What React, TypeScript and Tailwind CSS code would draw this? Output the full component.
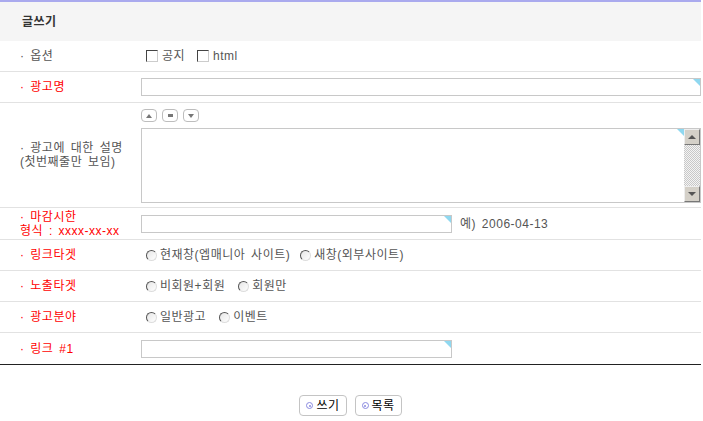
import React from "react";

const FONT = { fontFamily: '"Liberation Sans", "Noto Sans CJK KR", sans-serif' };

function Corner() {
  return (
    <span className="pointer-events-none absolute right-0 top-0 h-0 w-0 border-l-[7px] border-t-[7px] border-l-transparent border-t-[#8fd8f0]" />
  );
}

function TextInput({ width }: { width: string }) {
  return (
    <div className={`relative h-[18px] border border-[#c8c8c8] bg-white ${width}`}>
      <Corner />
    </div>
  );
}

function Check({ label }: { label: string }) {
  return (
    <span className="flex items-center gap-[4px]">
      <span className="h-[12px] w-[12px] border border-l-[#444] border-t-[#444] border-r-[#ccc] border-b-[#ccc] bg-white" />
      <span>{label}</span>
    </span>
  );
}

function Radio({ label }: { label: string }) {
  return (
    <span className="flex items-center gap-[3px]">
      <span className="h-[11px] w-[11px] rounded-full border border-t-[#555] border-l-[#555] border-r-[#ddd] border-b-[#ddd] bg-gradient-to-br from-[#e6e6e6] to-white" />
      <span>{label}</span>
    </span>
  );
}

function Label({ children, red }: { children: React.ReactNode; red?: boolean }) {
  return (
    <div className={`w-[141px] shrink-0 pl-[20px] leading-[14px] ${red ? "text-[#ff0000]" : "text-[#555]"}`}>
      {children}
    </div>
  );
}

function Row({ children, h }: { children: React.ReactNode; h: string }) {
  return <div className={`flex items-center border-b border-[#e2e2e2] ${h}`}>{children}</div>;
}

function SmallBtn({ kind }: { kind: "up" | "mid" | "down" }) {
  return (
    <span className="flex h-[13px] w-[16px] items-center justify-center rounded-[4px] border border-[#bdbdbd] bg-white">
      {kind === "up" && <span className="h-0 w-0 border-x-[3px] border-b-[4px] border-x-transparent border-b-[#777]" />}
      {kind === "mid" && <span className="h-[3px] w-[5px] bg-[#777]" />}
      {kind === "down" && <span className="h-0 w-0 border-x-[3px] border-t-[4px] border-x-transparent border-t-[#777]" />}
    </span>
  );
}

function ScrollBtn({ down }: { down?: boolean }) {
  return (
    <span className="flex h-[16px] w-[16px] items-center justify-center border border-t-[#eee] border-l-[#eee] border-r-[#777] border-b-[#777] bg-[#d4d0c8]">
      {down ? (
        <span className="h-0 w-0 border-x-[4px] border-t-[4px] border-x-transparent border-t-[#555]" />
      ) : (
        <span className="h-0 w-0 border-x-[4px] border-b-[4px] border-x-transparent border-b-[#555]" />
      )}
    </span>
  );
}

function ActionBtn({ label }: { label: string }) {
  return (
    <button className="flex h-[21px] items-center gap-[3px] rounded-[4px] border border-[#c4c4c4] bg-white px-[6px] text-[12px] text-black">
      <span className="flex h-[7px] w-[7px] items-center justify-center rounded-full border border-[#8a8ae0]">
        <span className="h-[2px] w-[2px] rounded-full bg-[#8a8ae0]" />
      </span>
      {label}
    </button>
  );
}

export default function App() {
  return (
    <div
      className="h-[421px] w-[703px] bg-white text-[12px] tracking-[0.5px] text-[#555] [word-spacing:2px]"
      style={FONT}
    >
      <div className="w-[701px]">
        <div className="h-[2px] bg-[#aaaaee]" />
        <div className="flex h-[39px] items-center bg-[#f5f5f5] pl-[22px] text-[12px] font-bold text-[#333]">
          글쓰기
        </div>

        <Row h="h-[31px]">
          <Label>· 옵션</Label>
          <div className="flex items-center gap-[12px] pl-[5px]">
            <Check label="공지" />
            <Check label="html" />
          </div>
        </Row>

        <Row h="h-[31px]">
          <Label red>· 광고명</Label>
          <TextInput width="flex-1" />
        </Row>

        <Row h="h-[105px]">
          <Label>
            · 광고에 대한 설명
            <br />
            (첫번째줄만 보임)
          </Label>
          <div className="flex flex-1 flex-col gap-[6px] pt-[2px]">
            <div className="flex gap-[5px]">
              <SmallBtn kind="up" />
              <SmallBtn kind="mid" />
              <SmallBtn kind="down" />
            </div>
            <div className="relative flex h-[75px] border border-[#c8c8c8] bg-white">
              <div className="relative flex-1">
                <Corner />
              </div>
              <div className="flex w-[16px] flex-col justify-between bg-[repeating-conic-gradient(#c8c8c8_0%_25%,#f4f4f4_0%_50%)] bg-[length:2px_2px]">
                <ScrollBtn />
                <ScrollBtn down />
              </div>
            </div>
          </div>
        </Row>

        <Row h="h-[32px]">
          <Label red>
            <span className="leading-[13px]">
              · 마감시한
              <br />
              형식 : xxxx-xx-xx
            </span>
          </Label>
          <TextInput width="w-[311px]" />
          <span className="ml-[8px]">예) 2006-04-13</span>
        </Row>

        <Row h="h-[31px]">
          <Label red>· 링크타겟</Label>
          <div className="flex items-center gap-[10px] pl-[5px]">
            <Radio label="현재창(엡매니아 사이트)" />
            <Radio label="새창(외부사이트)" />
          </div>
        </Row>

        <Row h="h-[31px]">
          <Label red>· 노출타겟</Label>
          <div className="flex items-center gap-[13px] pl-[5px]">
            <Radio label="비회원+회원" />
            <Radio label="회원만" />
          </div>
        </Row>

        <Row h="h-[31px]">
          <Label red>· 광고분야</Label>
          <div className="flex items-center gap-[13px] pl-[5px]">
            <Radio label="일반광고" />
            <Radio label="이벤트" />
          </div>
        </Row>

        <div className="flex h-[32px] items-center border-b border-[#222]">
          <Label red>· 링크 #1</Label>
          <TextInput width="w-[311px]" />
        </div>

        <div className="flex justify-center gap-[8px] pt-[30px]">
          <ActionBtn label="쓰기" />
          <ActionBtn label="목록" />
        </div>
      </div>
    </div>
  );
}
